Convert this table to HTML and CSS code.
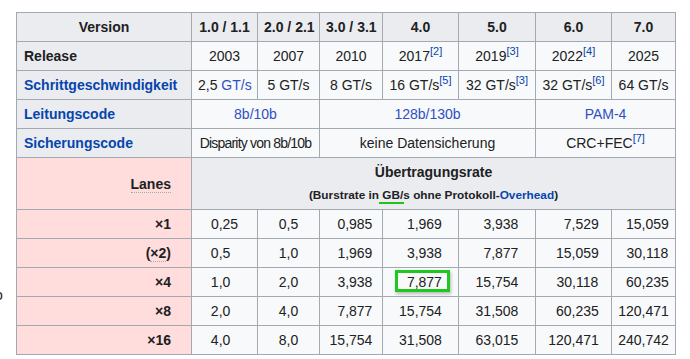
FILE: index.html
```html
<!DOCTYPE html>
<html lang="de">
<head>
<meta charset="utf-8">
<title>PCI Express Versionen</title>
<link rel="stylesheet" href="styles.css">
</head>
<body>
<span class="stray">o</span>
<div class="wrap">
<table class="wikitable">
  <colgroup>
    <col class="c0"><col class="c1"><col class="c2"><col class="c3"><col class="c4"><col class="c5"><col class="c6"><col class="c7">
  </colgroup>
  <tr>
    <th>Version</th><th>1.0 / 1.1</th><th>2.0 / 2.1</th><th>3.0 / 3.1</th><th>4.0</th><th>5.0</th><th>6.0</th><th>7.0</th>
  </tr>
  <tr>
    <th class="rh">Release</th>
    <td>2003</td><td>2007</td><td>2010</td>
    <td>2017<sup class="ref">[2]</sup></td>
    <td>2019<sup class="ref">[3]</sup></td>
    <td>2022<sup class="ref">[4]</sup></td>
    <td>2025</td>
  </tr>
  <tr>
    <th class="rh"><a href="#">Schrittgeschwindigkeit</a></th>
    <td>2,5 <a class="lt" href="#">GT/s</a></td><td>5 GT/s</td><td>8 GT/s</td>
    <td>16 GT/s<sup class="ref">[5]</sup></td>
    <td>32 GT/s<sup class="ref">[3]</sup></td>
    <td>32 GT/s<sup class="ref">[6]</sup></td>
    <td>64 GT/s</td>
  </tr>
  <tr>
    <th class="rh"><a href="#">Leitungscode</a></th>
    <td colspan="2"><a class="lt" href="#">8b/10b</a></td>
    <td colspan="3"><a class="lt" href="#">128b/130b</a></td>
    <td colspan="2"><a class="lt" href="#">PAM-4</a></td>
  </tr>
  <tr>
    <th class="rh"><a href="#">Sicherungscode</a></th>
    <td colspan="2"><span class="narrow">Disparity von 8b/10b</span></td>
    <td colspan="3">keine Datensicherung</td>
    <td colspan="2">CRC+FEC<sup class="ref">[7]</sup></td>
  </tr>
  <tr>
    <th class="lanes"><abbr title="Anzahl der Lanes">Lanes</abbr></th>
    <th colspan="7" class="rate">Übertragungsrate<br><small>(Burstrate in <abbr class="gbs" title="Gigabyte pro Sekunde">GB/s</abbr> ohne Protokoll-<a href="#">Overhead</a>)</small></th>
  </tr>
  <tr>
    <th class="lanes">×1</th>
    <td>0,25</td><td>0,5</td><td><span class="z">0</span>0,985</td><td><span class="z">0</span>1,969</td><td><span class="z">0</span>3,938</td><td><span class="z">00</span>7,529</td><td><span class="z">0</span>15,059</td>
  </tr>
  <tr>
    <th class="lanes">(<abbr title="selten verwendet">×2</abbr>)</th>
    <td>0,5<span class="z">0</span></td><td>1,0</td><td><span class="z">0</span>1,969</td><td><span class="z">0</span>3,938</td><td><span class="z">0</span>7,877</td><td><span class="z">0</span>15,059</td><td><span class="z">0</span>30,118</td>
  </tr>
  <tr>
    <th class="lanes">×4</th>
    <td>1,0<span class="z">0</span></td><td>2,0</td><td><span class="z">0</span>3,938</td><td class="hl"><span class="z">0</span>7,877<span class="box"></span></td><td>15,754</td><td><span class="z">0</span>30,118</td><td><span class="z">0</span>60,235</td>
  </tr>
  <tr>
    <th class="lanes">×8</th>
    <td>2,0<span class="z">0</span></td><td>4,0</td><td><span class="z">0</span>7,877</td><td>15,754</td><td>31,508</td><td><span class="z">0</span>60,235</td><td>120,471</td>
  </tr>
  <tr>
    <th class="lanes">×16</th>
    <td>4,0<span class="z">0</span></td><td>8,0</td><td>15,754</td><td>31,508</td><td>63,015</td><td>120,471</td><td>240,742</td>
  </tr>
</table>
</div>
</body>
</html>
```
FILE: styles.css
```css
html, body {
  margin: 0;
  padding: 0;
  background: #ffffff;
}
body {
  font-family: "Liberation Sans", Arial, sans-serif;
  font-size: 14px;
  color: #202122;
  position: relative;
}
.wrap {
  padding: 12px 0 0 16px;
}
.stray {
  position: absolute;
  left: -5px;
  top: 287px;
  font-size: 14px;
  color: #202122;
}
.wikitable {
  border-collapse: collapse;
  table-layout: fixed;
  width: 659px;
  background: #f8f9fa;
  color: #202122;
  border: 1px solid #a2a9b1;
}
.c0 { width: 175px; }
.c1 { width: 66px; }
.c2 { width: 62px; }
.c3 { width: 63px; }
.c4 { width: 76px; }
.c5 { width: 77px; }
.c6 { width: 76px; }
.c7 { width: 64px; }
.wikitable th,
.wikitable td {
  border: 1px solid #a2a9b1;
  padding: 3px 6px;
  line-height: 22px;
  text-align: center;
  white-space: nowrap;
  height: 22px;
}
.wikitable th {
  background: #eaecf0;
  font-weight: bold;
}
.wikitable th.rh {
  text-align: left;
  padding-left: 7px;
}
.wikitable th.lanes {
  background: #ffdddd;
  text-align: right;
  padding-right: 20px;
}
a {
  color: #0645ad;
  text-decoration: none;
}
a.lt {
  color: #2e50c4;
}
abbr {
  text-decoration: none;
  border-bottom: 1px dotted #a2a9b1;
}
.rate small {
  font-size: 11.8px;
  line-height: 22px;
}
.gbs {
  position: relative;
  border-bottom: none;
}
.gbs::after {
  content: "";
  position: absolute;
  left: -3px;
  width: 25px;
  bottom: -2px;
  height: 2px;
  background: #1cc41c;
}
sup.ref {
  font-size: 11px;
  line-height: 1;
  vertical-align: 6px;
  font-weight: normal;
  color: #0645ad;
}
.z {
  visibility: hidden;
}
.narrow {
  letter-spacing: -0.8px;
}
td.hl {
  position: relative;
}
.box {
  position: absolute;
  left: 12px;
  right: 8px;
  top: 2px;
  bottom: 4px;
  border: 3px solid #1ec81e;
  box-shadow: 1px 2px 3px rgba(0, 0, 0, 0.25);
}
```
